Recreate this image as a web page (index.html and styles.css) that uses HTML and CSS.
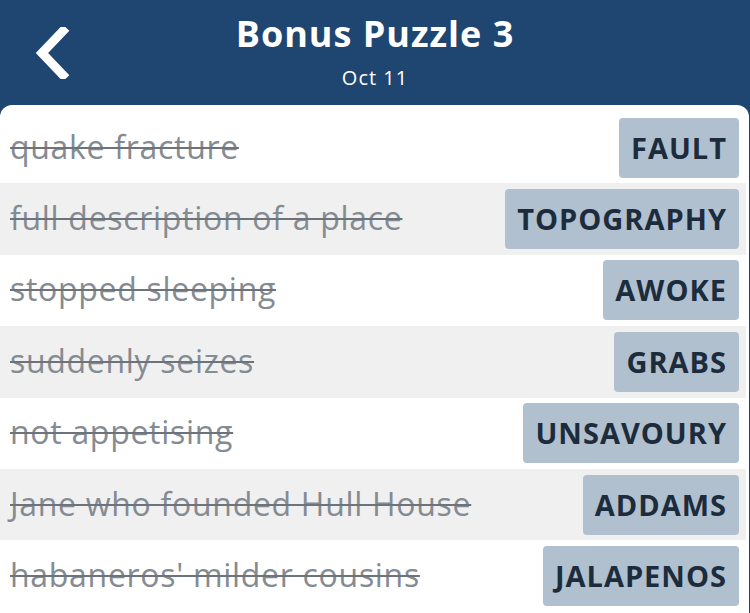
FILE: index.html
```html
<!DOCTYPE html>
<html lang="en">
<head>
	<meta charset="UTF-8">
	<title>Bonus Puzzle 3</title>
	<link rel="stylesheet" href="styles.css">
</head>
<body>
	<div id="header">
		<a class="back" href="javascript:void(0);">
			<svg width="36" height="52" viewBox="0 0 36 52"><path d="M29 4 L8 26 L29 48" fill="none" stroke="#fff" stroke-width="9" stroke-linecap="square"/></svg>
		</a>
		<div class="title">Bonus Puzzle 3</div>
		<div class="date">Oct 11</div>
	</div>
	<div id="list">
		<div class="row"><span class="clue">quake fracture</span><span class="answer">FAULT</span></div>
		<div class="row alt"><span class="clue">full description of a place</span><span class="answer">TOPOGRAPHY</span></div>
		<div class="row"><span class="clue">stopped sleeping</span><span class="answer">AWOKE</span></div>
		<div class="row alt"><span class="clue">suddenly seizes</span><span class="answer">GRABS</span></div>
		<div class="row"><span class="clue">not appetising</span><span class="answer">UNSAVOURY</span></div>
		<div class="row alt"><span class="clue">Jane who founded Hull House</span><span class="answer">ADDAMS</span></div>
		<div class="row"><span class="clue">habaneros' milder cousins</span><span class="answer">JALAPENOS</span></div>
	</div>
</body>
</html>
```
FILE: styles.css
```css
*{padding:0;margin:0;box-sizing:border-box;}
a{text-decoration:none;}
body{background:#1f4671;font-family:"Open Sans","Lato",sans-serif;width:750px;height:613px;overflow:hidden;}
#header{height:105px;position:relative;text-align:center;color:#fff;padding-top:11px;}
#header .back{position:absolute;left:34px;top:27px;display:block;}
#header .title{font-size:36px;font-weight:bold;line-height:46px;letter-spacing:1px;}
#header .date{font-size:20px;line-height:26px;margin-top:8px;letter-spacing:1px;}
#list{background:#fff;border-radius:12px 12px 0 0;padding-top:7px;margin-right:1px;height:508px;}
.row{height:71.4px;display:flex;align-items:center;justify-content:space-between;padding:0 7px 0 10px;margin-right:3px;}
.row.alt{background:#f0f0f0;}
.clue{font-size:32px;letter-spacing:0.7px;color:#858b92;text-decoration:line-through;text-decoration-color:#6c737a;text-decoration-thickness:1.5px;margin-top:-3px;}
.answer{height:60px;line-height:60px;background:#b0c0cf;border-radius:4px;padding:0 12px;font-size:29px;font-weight:bold;letter-spacing:1px;color:#1d2c3c;}
```
